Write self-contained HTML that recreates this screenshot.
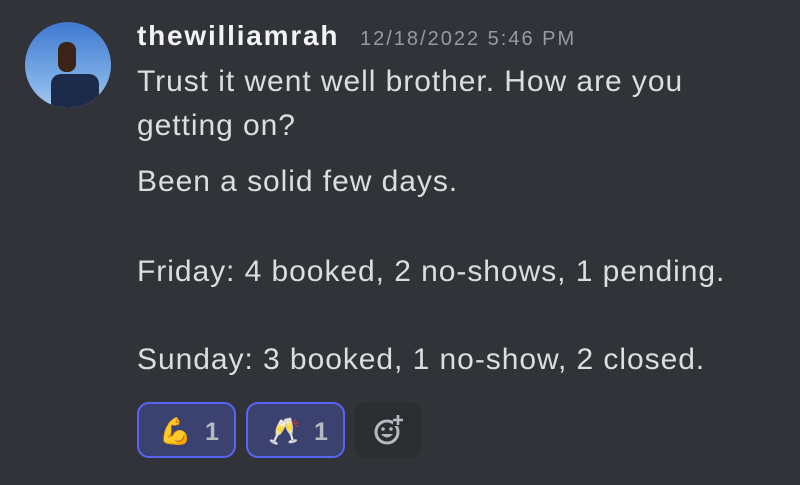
<!DOCTYPE html><html><head><style>
body{margin:0;width:800px;height:485px;background:#313338;font-family:"Liberation Sans",sans-serif;overflow:hidden;position:relative}
.av{position:absolute;left:25px;top:22px;width:86px;height:86px;border-radius:50%;background:linear-gradient(#3f78d0,#7fb0e8 70%,#a9c9ef);overflow:hidden}
.name{position:absolute;left:137px;top:20px;font-size:28px;font-weight:bold;color:#f2f3f5;letter-spacing:1.8px}
.ts{position:absolute;left:360px;top:28px;font-size:20px;color:#949ba4;letter-spacing:2px}
.t{position:absolute;left:137px;font-size:30px;color:#dbdee1;white-space:nowrap;letter-spacing:0.95px}
.r{position:absolute;top:402px;height:56px;border-radius:12px;box-sizing:border-box}
.rx{border:2px solid #5865f2;background:#3c4270;width:99px}
.rx span{position:absolute;left:20px;top:12px;font-size:26px}
.rx b{position:absolute;left:66px;top:14px;font-size:25px;color:#b5bac1}
</style></head><body>
<div class="av"><div style="position:absolute;left:26px;top:52px;width:48px;height:40px;background:#1d2a4a;border-radius:10px 10px 0 0"></div><div style="position:absolute;left:33px;top:20px;width:18px;height:30px;background:#3a2418;border-radius:8px"></div></div>
<div class="name">thewilliamrah</div>
<div class="ts">12/18/2022 5:46 PM</div>
<div class="t" style="top:65px">Trust it went well brother. How are you</div>
<div class="t" style="top:109px">getting on?</div>
<div class="t" style="top:165px">Been a solid few days.</div>
<div class="t" style="top:255px">Friday: 4 booked, 2 no-shows, 1 pending.</div>
<div class="t" style="top:343px">Sunday: 3 booked, 1 no-show, 2 closed.</div>
<div class="r rx" style="left:137px"><span>💪</span><b>1</b></div>
<div class="r rx" style="left:246px"><span>🥂</span><b>1</b></div>
<div class="r" style="left:355px;width:66px;background:#2b2d31">
<svg width="66" height="56" viewBox="0 0 66 56"><circle cx="32" cy="30" r="11" fill="none" stroke="#b5bac1" stroke-width="3"/><circle cx="28" cy="27" r="1.8" fill="#b5bac1"/><circle cx="36" cy="27" r="1.8" fill="#b5bac1"/><path d="M26 32 Q32 39 38 32Z" fill="#b5bac1"/><rect x="38" y="14" width="10" height="10" fill="#2b2d31"/><path d="M43 13v10M38 18h10" stroke="#b5bac1" stroke-width="2.6"/></svg></div>
</body></html>
